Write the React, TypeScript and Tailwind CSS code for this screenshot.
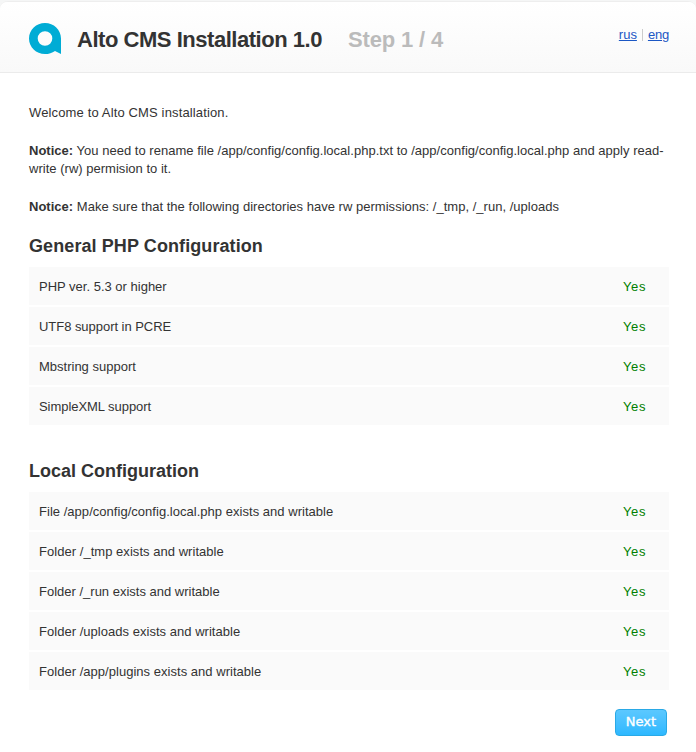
import React from "react";

type Check = { label: string; tracking?: string };

const general: Check[] = [
  { label: "PHP ver. 5.3 or higher" },
  { label: "UTF8 support in PCRE", tracking: "tracking-[-0.04px]" },
  { label: "Mbstring support" },
  { label: "SimpleXML support", tracking: "tracking-[-0.05px]" },
];

const local: Check[] = [
  { label: "File /app/config/config.local.php exists and writable", tracking: "tracking-[0.03px]" },
  { label: "Folder /_tmp exists and writable", tracking: "tracking-[0.04px]" },
  { label: "Folder /_run exists and writable" },
  { label: "Folder /uploads exists and writable", tracking: "tracking-[0.03px]" },
  { label: "Folder /app/plugins exists and writable", tracking: "tracking-[0.03px]" },
];

function Checks({ items }: { items: Check[] }) {
  return (
    <ul className="flex flex-col gap-[2px]">
      {items.map(({ label, tracking }) => (
        <li key={label} className="flex h-[38px] items-center justify-between bg-[#fafafa] pl-[10px] pr-[23px] pt-[2px]">
          <span className={tracking}>{label}</span>
          <span className="tracking-[0.6px] text-[#008000]">Yes</span>
        </li>
      ))}
    </ul>
  );
}

function Logo() {
  return (
    <svg width="32" height="31" viewBox="0 0 32 31" className="shrink-0">
      <path
        fill="#00acd5"
        fillRule="evenodd"
        d="M16 0C24.8 0 32 6.8 32 15.5V31L26 27.9C23.2 30 19.8 31 16 31C7.2 31 0 24.2 0 15.5S7.2 0 16 0ZM16 8.2A7.3 7.3 0 1 0 16 22.8A7.3 7.3 0 1 0 16 8.2Z"
      />
    </svg>
  );
}

export default function App() {
  return (
    <div className="h-[752px] w-[696px] overflow-hidden bg-[#f5f6f6] pt-[1px] font-['Liberation_Sans',Arial,sans-serif] text-[13px] leading-[18px] text-[#333]">
      <div className="h-[751px] rounded-t-[8px] border-t border-[#eee] bg-white">
        <header className="flex h-[71px] items-start rounded-t-[7px] border-b border-[#ebebeb] bg-linear-to-b from-white to-[#f9f9f9] pl-[29px] pr-[27px]">
          <div className="mt-[21px]">
            <Logo />
          </div>
          <h1 className="ml-[16px] mt-[24px] w-[245px] whitespace-nowrap text-[22px] font-bold leading-[28px] tracking-[-0.47px]">
            Alto CMS Installation 1.0
          </h1>
          <span className="ml-[26px] mt-[24px] whitespace-nowrap text-[22px] font-bold leading-[28px] tracking-[-0.15px] text-[#bbb]">
            Step 1 / 4
          </span>
          <nav className="ml-auto mt-[24px] flex items-center text-[#1b57c4]">
            <a className="underline" href="#rus">rus</a>
            <span className="mx-[5px] h-[12px] w-px bg-[#ccc]" />
            <a className="tracking-[-0.2px] underline" href="#eng">eng</a>
          </nav>
        </header>
        <main className="px-[29px] pt-[31px]">
          <div className="w-[638px]">
            <p className="tracking-[0.14px]">Welcome to Alto CMS installation.</p>
            <p className="mt-[20px] whitespace-nowrap tracking-[0.02px]">
              <b>Notice:</b> You need to rename file /app/config/config.local.php.txt to /app/config/config.local.php and apply read-
              <br />
              write (rw) permision to it.
            </p>
            <p className="mt-[20px] tracking-[0.02px]">
              <b>Notice:</b> Make sure that the following directories have rw permissions: /_tmp, /_run, /uploads
            </p>
          </div>
          <div className="w-[640px]">
            <h2 className="mb-[9px] mt-[18px] text-[18px] font-bold leading-[24px] tracking-[0.09px]">General PHP Configuration</h2>
            <Checks items={general} />
            <h2 className="mb-[9px] mt-[34px] text-[18px] font-bold leading-[24px]">Local Configuration</h2>
            <Checks items={local} />
          </div>
          <div className="mt-[19px] flex w-[638px] justify-end">
            <button className="h-[27px] w-[52px] rounded-[4px] border border-[#2aa9e6] bg-linear-to-b from-[#5bc8ff] to-[#2cb8ff] pb-[2px] font-['DejaVu_Sans',Verdana,sans-serif] text-[13px] leading-[23px] text-white [-webkit-text-stroke:0.35px_white]">
              Next
            </button>
          </div>
        </main>
      </div>
    </div>
  );
}
